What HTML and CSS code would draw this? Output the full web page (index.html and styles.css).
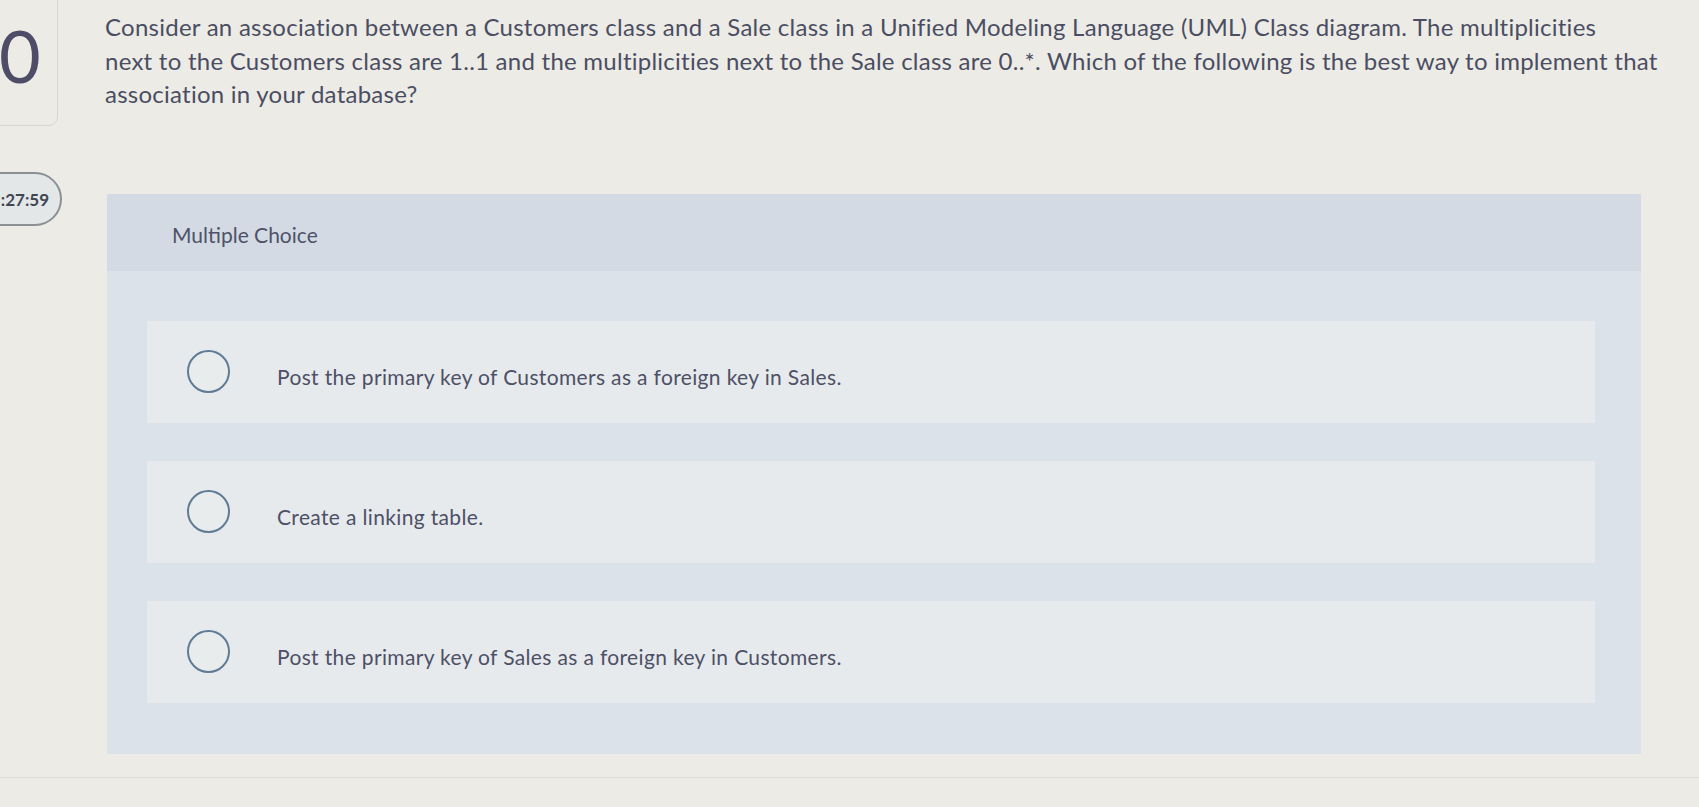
FILE: index.html
```html
<!DOCTYPE html>
<html lang="en">
<head>
<meta charset="utf-8">
<title>Multiple Choice Question</title>
<link rel="stylesheet" href="styles.css">
</head>
<body>
<div class="page">
  <aside class="rail">
    <div class="qnum">0</div>
    <div class="timer">:27:59</div>
  </aside>
  <main class="main">
    <p class="question">Consider an association between a Customers class and a Sale class in a Unified Modeling Language (UML) Class diagram. The multiplicities<br>next to the Customers class are 1..1 and the multiplicities next to the Sale class are 0..*. Which of the following is the best way to implement that association in your database?</p>
    <section class="panel">
      <header class="panel-head">Multiple Choice</header>
      <div class="options">
        <label class="option"><span class="radio"></span><span class="opt-text">Post the primary key of Customers as a foreign key in Sales.</span></label>
        <label class="option"><span class="radio"></span><span class="opt-text">Create a linking table.</span></label>
        <label class="option"><span class="radio"></span><span class="opt-text">Post the primary key of Sales as a foreign key in Customers.</span></label>
      </div>
    </section>
  </main>
</div>
<div class="footer-line"></div>
</body>
</html>
```

FILE: styles.css
```css
html, body {
  margin: 0;
  padding: 0;
}
body {
  background: #ecebe6;
  font-family: Lato, "Open Sans", "Liberation Sans", sans-serif;
  color: #4b4e62;
  overflow: hidden;
  height: 807px;
}
.page {
  display: flex;
  align-items: flex-start;
}
.rail {
  width: 105px;
  flex: none;
  display: flex;
  flex-direction: column;
  align-items: flex-start;
}
.qnum {
  box-sizing: border-box;
  width: 78px;
  height: 136px;
  margin: -10px 0 0 -20px;
  padding: 28px 0 0 18px;
  border: 1.5px solid #d6d6d1;
  border-radius: 9px;
  font-size: 72px;
  line-height: 1;
  color: #4e4d68;
}
.timer {
  box-sizing: border-box;
  width: 92px;
  height: 54px;
  margin: 46px 0 0 -30px;
  padding-right: 11px;
  border: 2.5px solid #8b9095;
  border-radius: 27px;
  background: #e3e7e7;
  display: flex;
  align-items: center;
  justify-content: flex-end;
  font-weight: 700;
  font-size: 17px;
  color: #3f4652;
}
.main {
  flex: 1;
  padding-right: 10px;
}
.question {
  margin: 0;
  padding: 10px 0 0 0;
  font-size: 24px;
  line-height: 33.5px;
  letter-spacing: 0.25px;
  color: #4b4e62;
}
.panel {
  margin: 83px 48px 0 2px;
  background: #dce2e9;
}
.panel-head {
  background: #d3dae4;
  height: 77px;
  box-sizing: border-box;
  padding: 28px 0 0 65px;
  font-size: 21px;
  line-height: 25px;
  color: #4f5268;
}
.options {
  display: flex;
  flex-direction: column;
  gap: 38px;
  padding: 50px 46px 51px 40px;
}
.option {
  height: 102px;
  background: #e7eaec;
  display: flex;
  align-items: center;
  padding-left: 40px;
}
.radio {
  box-sizing: border-box;
  width: 43px;
  height: 43px;
  flex: none;
  border: 2px solid #5f7b95;
  border-radius: 50%;
  background: #e9ecec;
}
.opt-text {
  margin: 10px 0 0 47px;
  font-size: 21px;
  letter-spacing: 0.35px;
  color: #4d5066;
}
.footer-line {
  position: absolute;
  left: 0;
  right: 0;
  top: 777px;
  border-top: 1px solid #dedcd6;
}
```
